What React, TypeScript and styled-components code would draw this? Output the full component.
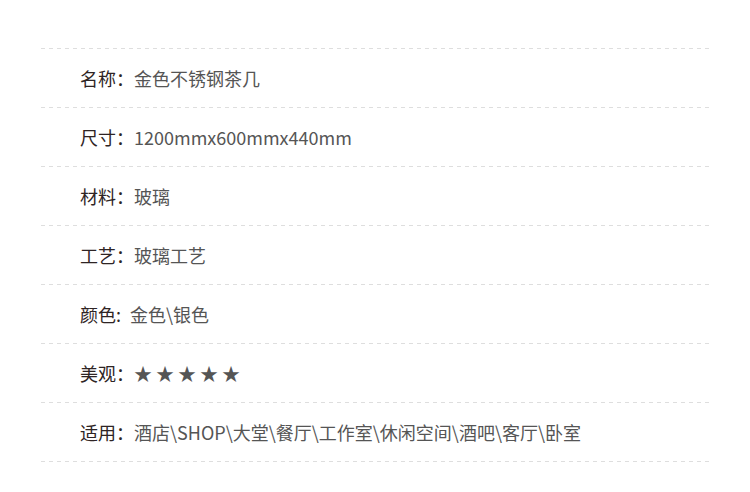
import styled, { createGlobalStyle } from "styled-components";

const GlobalStyle = createGlobalStyle`
  body {
    margin: 0;
    background: #fff;
    font-family: "Noto Sans CJK SC", "Noto Sans", sans-serif;
  }
`;

const Page = styled.div`
  padding: 48px 41px 30px;
`;

const Dash = styled.div`
  height: 1px;
  background: repeating-linear-gradient(
    to right,
    #dedede 0,
    #dedede 4px,
    transparent 4px,
    transparent 8px
  );
`;

const Row = styled.div`
  display: flex;
  align-items: center;
  height: 58px;
  padding-left: 39px;
  font-size: 18px;
  line-height: 1;
`;

const Label = styled.span<{ $gap?: number }>`
  color: #2e2424;
  white-space: pre;
  margin-right: ${({ $gap }) => $gap ?? 0}px;
`;

const Value = styled.span<{ $stars?: boolean }>`
  color: #555;
  letter-spacing: ${({ $stars }) => ($stars ? "4px" : "0")};
`;

const specs: { label: string; value: string; stars?: boolean; gap?: number }[] = [
  { label: "名称：", value: "金色不锈钢茶几" },
  { label: "尺寸：", value: "1200mmx600mmx440mm" },
  { label: "材料：", value: "玻璃" },
  { label: "工艺：", value: "玻璃工艺" },
  { label: "颜色:", value: "金色\\银色", gap: 9 },
  { label: "美观：", value: "★★★★★", stars: true },
  { label: "适用：", value: "酒店\\SHOP\\大堂\\餐厅\\工作室\\休闲空间\\酒吧\\客厅\\卧室" },
];

function App() {
  return (
    <Page>
      <GlobalStyle />
      <Dash />
      {specs.map((s) => (
        <div key={s.label}>
          <Row>
            <Label $gap={s.gap}>{s.label}</Label>
            <Value $stars={s.stars}>{s.value}</Value>
          </Row>
          <Dash />
        </div>
      ))}
    </Page>
  );
}

export default App;
